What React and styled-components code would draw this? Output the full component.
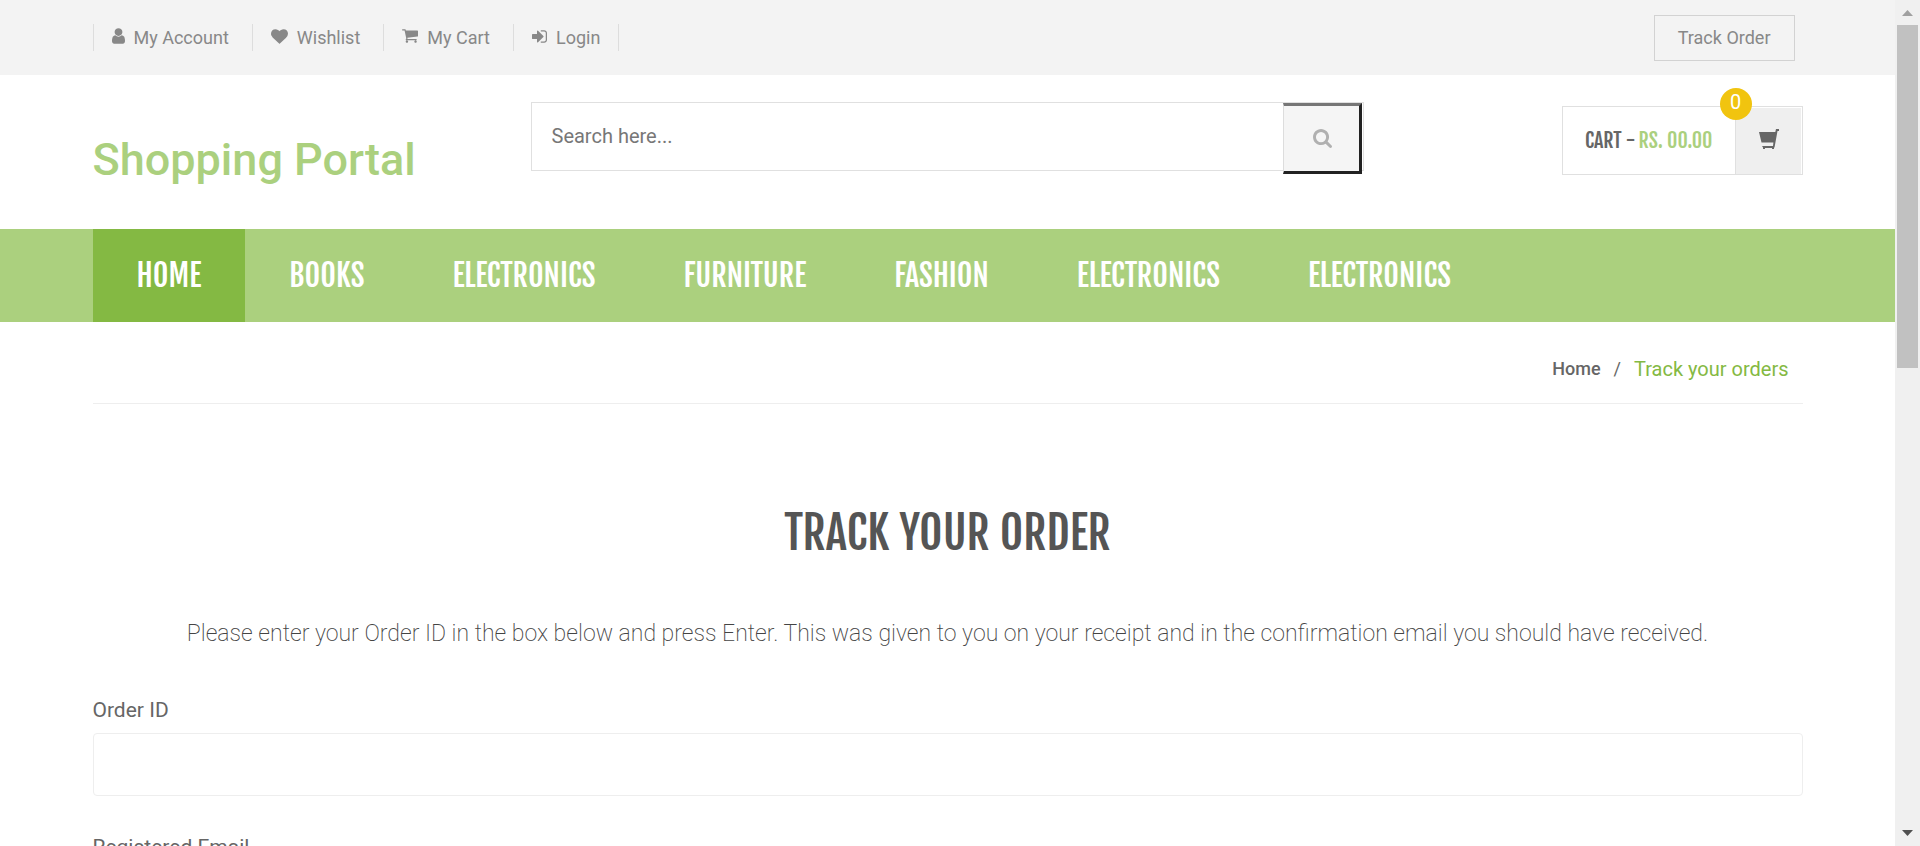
import React from "react";
import styled, { createGlobalStyle } from "styled-components";

const Global = createGlobalStyle`
  *, *::before, *::after { box-sizing: border-box; }
  body { margin: 0; background: #fff; color: #666; font-family: Roboto, "Open Sans", sans-serif; font-size: 20px; }
  a { color: inherit; text-decoration: none; }
  h1, h2, p, ul, ol { margin: 0; padding: 0; list-style: none; }
`;

const condensed = `"Fjalla One", "Roboto Condensed", "Liberation Sans Narrow", sans-serif`;

const Viewport = styled.div`
  display: flex;
  height: 100vh;
  overflow: hidden;
`;
const Page = styled.div`
  flex: 1;
  min-width: 0;
`;
const Container = styled.div`
  max-width: 1710px;
  margin: 0 auto;
`;

const TopBar = styled.div`
  background: #f3f3f3;
  color: #888;
  font-size: 18px;
`;
const TopRow = styled(Container)`
  display: flex;
  align-items: center;
  justify-content: space-between;
  min-height: 75px;
  padding-right: 8px;
`;
const Links = styled.ul`
  display: flex;
  border-left: 1px solid #ddd;
`;
const LinkItem = styled.li`
  padding-right: 23px;
  border-right: 1px solid #ddd;
  &:last-child { padding-right: 18px; }
`;
const TopLink = styled.a`
  display: flex;
  align-items: center;
  gap: 9px;
  height: 27px;
  padding-left: 18px;
  svg { margin-bottom: 3px; }
`;
const TrackButton = styled.button`
  height: 46px;
  padding: 0 23px;
  border: 1px solid #d2d2d2;
  background: transparent;
  color: #888;
  font: inherit;
`;

const Masthead = styled(Container)`
  display: grid;
  grid-template-columns: 438px minmax(0, 833px) 1fr;
  align-items: start;
  height: 154px;
  padding-top: 27px;
`;
const Logo = styled.h1`
  margin-top: 31px;
  color: #abd07e;
  font-size: 45px;
  font-weight: 500;
  line-height: 54px;
`;
const SearchForm = styled.form`
  display: flex;
  height: 69px;
  border: 1px solid #e0e0e0;
  padding-right: 1px;
`;
const SearchInput = styled.input`
  flex: 1;
  min-width: 0;
  padding: 0 20px 2px;
  border: 0;
  background: transparent;
  color: #666;
  font: inherit;
  &::placeholder { color: #777; }
`;
const SearchButton = styled.button`
  width: 79px;
  height: 71px;
  padding: 2px 0 0 2px;
  border: 3px solid #222;
  border-top-color: #767676;
  border-left: 1px solid #ddd;
  background: #f5f5f5;
  color: #b0b0b0;
`;
const Cart = styled.a`
  position: relative;
  justify-self: end;
  display: flex;
  height: 69px;
  margin-top: 4px;
  padding: 1px 1px 0 0;
  border: 1px solid #e0e0e0;
  color: #666;
  font-family: ${condensed};
  font-size: 20px;
`;
const CartTotal = styled.span`
  display: flex;
  align-items: center;
  gap: 3px;
  padding: 0 22px 2px;
`;
const Amount = styled.span`
  color: #abd07e;
`;
const CartIconBox = styled.span`
  display: grid;
  place-items: center;
  width: 66px;
  padding: 0 0 4px 1px;
  border-left: 1px solid #e0e0e0;
  background: #efefef;
`;
const Badge = styled.span`
  position: absolute;
  top: -19px;
  right: 50px;
  width: 32px;
  height: 32px;
  border-radius: 50%;
  background: #f1c40f;
  color: #fff;
  font-family: Roboto, sans-serif;
  font-size: 20px;
  line-height: 28px;
  text-align: center;
`;

const NavBar = styled.nav`
  background: #abd07e;
`;
const NavList = styled(Container).attrs({ as: "ul" })`
  display: flex;
`;
const NavLink = styled.a`
  display: block;
  padding: 0 44px;
  background: ${(p) => (p.$active ? "#84b943" : "transparent")};
  color: #fff;
  font-family: ${condensed};
  font-size: 30px;
  line-height: 93px;
  text-transform: uppercase;
`;

const Breadcrumb = styled(Container)`
  display: flex;
  align-items: center;
  justify-content: flex-end;
  gap: 13px;
  height: 82px;
  padding: 12px 14px 0 0;
  border-bottom: 1px solid #eee;
  font-size: 18px;
`;
const HomeCrumb = styled.a`
  font-weight: 500;
`;
const CurrentCrumb = styled.span`
  color: #84b943;
  font-size: 20px;
`;

const Main = styled(Container).attrs({ as: "main" })`
  padding-top: 97px;
`;
const Title = styled.h2`
  color: #555;
  font-family: ${condensed};
  font-size: 45px;
  font-weight: 500;
  line-height: 64px;
  text-align: center;
  text-transform: uppercase;
`;
const Intro = styled.p`
  margin-top: 53px;
  color: #444;
  font-size: 23px;
  font-weight: 200;
  line-height: 32px;
  text-align: center;
`;
const Form = styled.form`
  display: flex;
  flex-direction: column;
  gap: 36px;
  padding-top: 45px;
`;
const Field = styled.div`
  display: flex;
  flex-direction: column;
  gap: 8px;
`;
const Label = styled.label`
  font-size: 21px;
  line-height: 30px;
`;
const TextInput = styled.input`
  height: 63px;
  padding: 0 18px;
  border: 1px solid #eee;
  border-radius: 4px;
  font: inherit;
`;

const ScrollTrack = styled.div`
  display: flex;
  flex-direction: column;
  align-items: center;
  justify-content: space-between;
  width: 25px;
  padding-bottom: 10px;
  background: #f0f0f0;
`;
const ScrollTop = styled.div`
  display: flex;
  flex-direction: column;
  align-items: center;
  gap: 9px;
  height: 44%;
  padding-top: 10px;
`;
const Thumb = styled.div`
  flex: 1;
  width: 21px;
  background: #c1c1c1;
`;

const Icon = ({ d, box, w, h }) => (
  <svg viewBox={box} width={w} height={h} fill="currentColor" aria-hidden="true">
    <path d={d} />
  </svg>
);

const user = { w: 13, h: 16, box: "256 128 1280 1536", d: "M1536 1399q0 109-62.5 187t-150.5 78h-854q-88 0-150.5-78t-62.5-187q0-85 8.5-160.5t31.5-152 58.5-131 94-89 134.5-34.5q131 128 313 128t313-128q76 0 134.5 34.5t94 89 58.5 131 31.5 152 8.5 160.5zm-256-887q0 159-112.5 271.5t-271.5 112.5-271.5-112.5-112.5-271.5 112.5-271.5 271.5-112.5 271.5 112.5 112.5 271.5z" };
const heart = { w: 17, h: 15, box: "0 128 1792 1536", d: "M896 1664q-26 0-44-18l-624-602q-10-8-27.5-26t-55.5-65.5-68-97.5-53.5-121-23.5-138q0-220 127-344t351-124q62 0 126.5 21.5t120 58 95.5 68.5 76 68q36-36 76-68t95.5-68.5 120-58 126.5-21.5q224 0 351 124t127 344q0 221-229 450l-623 600q-18 18-44 18z" };
const cart = { w: 16, h: 14, box: "64 256 1664 1408", d: "M704 1536q0 52-38 90t-90 38-90-38-38-90 38-90 90-38 90 38 38 90zm896 0q0 52-38 90t-90 38-90-38-38-90 38-90 90-38 90 38 38 90zm128-1088v512q0 24-16.5 42.5t-40.5 21.5l-1044 122q13 60 13 70 0 16-24 64h920q26 0 45 19t19 45-19 45-45 19h-1024q-26 0-45-19t-19-45q0-11 8-31.5t16-36 21.5-40 15.5-29.5l-177-823h-204q-26 0-45-19t-19-45 19-45 45-19h256q16 0 28.5 6.5t19.5 15.5 13 24.5 8 26 5.5 29.5 4.5 26h1201q26 0 45 19t19 45z" };
const signIn = { w: 15, h: 13, box: "128 256 1536 1280", d: "M1312 896q0 26-19 45l-544 544q-19 19-45 19t-45-19-19-45v-288h-448q-26 0-45-19t-19-45v-384q0-26 19-45t45-19h448v-288q0-26 19-45t45-19 45 19l544 544q19 19 19 45zm352-352v704q0 119-84.5 203.5t-203.5 84.5h-320q-13 0-22.5-9.5t-9.5-22.5q0-4-1-20t-.5-26.5 3-23.5 10-19.5 20.5-6.5h320q66 0 113-47t47-113v-704q0-66-47-113t-113-47h-312l-11.5-1-11.5-3-8-5.5-7-9-2-13.5q0-4-1-20t-.5-26.5 3-23.5 10-19.5 20.5-6.5h320q119 0 203.5 84.5t84.5 203.5z" };
const search = { w: 19, h: 19, box: "64 128 1664 1664", d: "M1216 832q0-185-131.5-316.5t-316.5-131.5-316.5 131.5-131.5 316.5 131.5 316.5 316.5 131.5 316.5-131.5 131.5-316.5zm512 832q0 52-38 90t-90 38q-54 0-90-38l-343-342q-179 124-399 124-143 0-273.5-55.5t-225-150-150-225-55.5-273.5 55.5-273.5 150-225 225-150 273.5-55.5 273.5 55.5 225 150 150 225 55.5 273.5q0 220-124 399l343 343q37 37 37 90z" };
const basket = { w: 20, h: 20, box: "0 0 20 20", d: "M17 0h3v2h-1.500L15.500 18.500H15V20h-2v-1H6v1H4v-1.500L3 17h11l.4-3.500H2.500L0 3h16.300z" };

const topLinks = [["My Account", user], ["Wishlist", heart], ["My Cart", cart], ["Login", signIn]];
const categories = ["Home", "Books", "Electronics", "Furniture", "Fashion", "Electronics", "Electronics"];

export default function App() {
  return (
    <Viewport>
      <Global />
      <Page>
        <TopBar>
          <TopRow>
            <Links>
              {topLinks.map(([text, icon]) => (
                <LinkItem key={text}>
                  <TopLink href="#"><Icon {...icon} />{text}</TopLink>
                </LinkItem>
              ))}
            </Links>
            <TrackButton type="button">Track Order</TrackButton>
          </TopRow>
        </TopBar>
        <Masthead>
          <Logo><a href="#">Shopping Portal</a></Logo>
          <SearchForm onSubmit={(e) => e.preventDefault()}>
            <SearchInput type="text" aria-label="Search" placeholder="Search here..." />
            <SearchButton type="submit" aria-label="Search"><Icon {...search} /></SearchButton>
          </SearchForm>
          <Cart href="#">
            <CartTotal>CART - <Amount>RS. 00.00</Amount></CartTotal>
            <CartIconBox><Icon {...basket} /></CartIconBox>
            <Badge>0</Badge>
          </Cart>
        </Masthead>
        <NavBar>
          <NavList>
            {categories.map((name, i) => (
              <li key={i}><NavLink href="#" $active={i === 0}>{name}</NavLink></li>
            ))}
          </NavList>
        </NavBar>
        <Breadcrumb>
          <HomeCrumb href="#">Home</HomeCrumb>
          <span>/</span>
          <CurrentCrumb>Track your orders</CurrentCrumb>
        </Breadcrumb>
        <Main>
          <Title>Track your order</Title>
          <Intro>
            Please enter your Order ID in the box below and press Enter. This was given to you on your receipt and in the confirmation email you should have received.
          </Intro>
          <Form onSubmit={(e) => e.preventDefault()}>
            <Field>
              <Label htmlFor="order-id">Order ID</Label>
              <TextInput id="order-id" type="text" />
            </Field>
            <Field>
              <Label htmlFor="email">Registered Email</Label>
              <TextInput id="email" type="email" />
            </Field>
          </Form>
        </Main>
      </Page>
      <ScrollTrack aria-hidden="true">
        <ScrollTop>
          <svg width="11" height="6" viewBox="0 0 11 6" fill="#a0a0a0"><path d="M5.500 0 11 6H0z" /></svg>
          <Thumb />
        </ScrollTop>
        <svg width="11" height="6" viewBox="0 0 11 6" fill="#505050"><path d="M0 0h11L5.500 6z" /></svg>
      </ScrollTrack>
    </Viewport>
  );
}
